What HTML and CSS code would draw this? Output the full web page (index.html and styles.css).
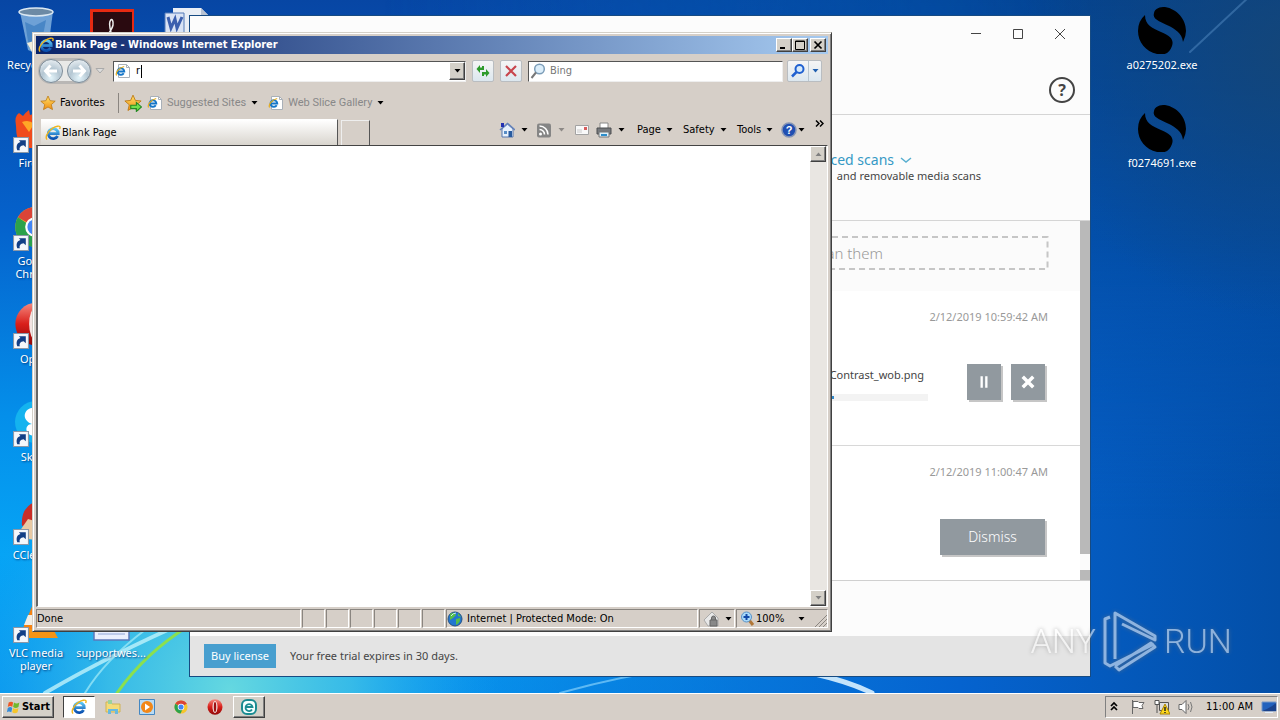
FILE: index.html
```html
<!DOCTYPE html>
<html lang="en">
<head>
<meta charset="utf-8">
<title>Desktop</title>
<link rel="stylesheet" href="styles.css">
</head>
<body>
<svg class="defs" aria-hidden="true">
  <defs>
    <linearGradient id="eBlue" x1="0" y1="0" x2="0" y2="1"><stop offset="0" stop-color="#5cc8f5"/><stop offset="1" stop-color="#0b50b0"/></linearGradient>
    <radialGradient id="orb" cx=".5" cy=".8" r=".8"><stop offset="0" stop-color="#e4f5fb"/><stop offset=".5" stop-color="#b4c6d2"/><stop offset="1" stop-color="#e8eef2"/></radialGradient>
    <linearGradient id="gold" x1="0" y1="0" x2="0" y2="1"><stop offset="0" stop-color="#ffe36a"/><stop offset="1" stop-color="#f08c10"/></linearGradient>
    <linearGradient id="operaRed" x1="0" y1="0" x2="0" y2="1"><stop offset="0" stop-color="#f58a80"/><stop offset=".5" stop-color="#d91f1a"/><stop offset="1" stop-color="#8f0808"/></linearGradient>
  </defs>
  <symbol id="ie" viewBox="0 0 16 16">
    <path d="M12.6 11A5 5 0 1 1 13.2 8.6H4.2" fill="none" stroke="url(#eBlue)" stroke-width="2.8"/>
    <path d="M2 14.6C-1 11 6 2.200 12.500 1.200C15 .8 15.600 2 14.600 4" fill="none" stroke="#f0b41c" stroke-width="1.400"/>
  </symbol>
  <symbol id="page" viewBox="0 0 16 16">
    <path d="M3.500 1.500h8l3 3v10h-11z" fill="#fff" stroke="#a9b0b8"/><path d="M11.500 1.500v3h3" fill="none" stroke="#a9b0b8"/>
    <path d="M8.700 10.300A3.300 3.300 0 1 1 9.200 8.400H3" fill="none" stroke="#1676c8" stroke-width="2"/>
    <path d="M1.600 12.500C0 10 4 4.500 9.200 3.500" fill="none" stroke="#e5ad20" stroke-width="1.200"/>
  </symbol>
  <symbol id="down" viewBox="0 0 7 4"><path d="M.5 0h6L3.500 3.500z" fill="currentColor"/></symbol>
  <symbol id="star" viewBox="0 0 16 16"><path d="M8 1l2.100 4.700 5.100.5-3.900 3.400 1.200 5L8 12l-4.500 2.600 1.200-5L.8 6.200l5.100-.5z" fill="url(#gold)" stroke="#bd7a15" stroke-width=".8"/></symbol>
  <symbol id="shortcut" viewBox="0 0 15 15"><path d="M.5.500h14v14H.5z" fill="#f4f7fb" stroke="#8b98a8"/><path d="M4 12.500C2.500 8.500 4 5.500 7 4.800L5.500 3H12v6.500L10 7.700C7 8 5.500 10 6.500 12.500z" fill="#123f86"/></symbol>
  <symbol id="chrome" viewBox="0 0 32 32">
    <circle cx="16" cy="16" r="15" fill="#f6c52b"/><path d="M16 16L3 8.500A15 15 0 0 1 29 8.500z" fill="#db4437"/><path d="M3 8.500A15 15 0 0 0 15 31L20 20z" fill="#2ba24c"/><path d="M16 9h13.300L29 8.500 16 7z" fill="#db4437"/><circle cx="16" cy="16" r="7.500" fill="#fff"/><circle cx="16" cy="16" r="5.800" fill="#4285f4"/>
  </symbol>
  <symbol id="opera" viewBox="0 0 32 32"><ellipse cx="16" cy="16" rx="15" ry="15.500" fill="url(#operaRed)"/><ellipse cx="16" cy="16" rx="5" ry="12" fill="#f3e4e2"/><ellipse cx="16" cy="16" rx="2.500" ry="10" fill="#9d1010"/></symbol>
  <symbol id="blackball" viewBox="0 0 48 48">
    <path d="M16 7C17 2 22 1 27 1C39 3 48 13 48 25Q48 30 45 36C44 27 37 23 30 19.500C21 15 14 13 16 7z"/>
    <path d="M7 9C7 19 14 22 23 26C33 30 36 34 34 40Q31 49 22 48.500C9 47 0 37 0 25Q0 15 7 9z"/>
  </symbol>
</svg>

<main class="desktop">
  <svg class="wallpaper" viewBox="0 0 1280 693" preserveAspectRatio="none" aria-hidden="true">
    <defs>
      <linearGradient id="wv" x1="0" y1="0" x2="0" y2="1"><stop offset="0" stop-color="#0746a4"/><stop offset=".32" stop-color="#0562cc"/><stop offset=".6" stop-color="#048fea"/><stop offset=".8" stop-color="#06a4f5"/><stop offset="1" stop-color="#0898f0"/></linearGradient>
      <linearGradient id="wr" x1="0" y1="0" x2="1" y2="0"><stop offset=".3" stop-color="#0560cc" stop-opacity="0"/><stop offset=".75" stop-color="#0563cf"/><stop offset="1" stop-color="#034fa8"/></linearGradient>
      <linearGradient id="wt" x1="0" y1="0" x2="0" y2="1"><stop offset="0" stop-color="#03408c" stop-opacity=".9"/><stop offset=".35" stop-color="#03489c" stop-opacity=".6"/><stop offset=".75" stop-color="#0558be" stop-opacity="0"/></linearGradient>
      <radialGradient id="wd" cx="1290" cy="50" r="270" gradientUnits="userSpaceOnUse"><stop offset="0" stop-color="#154677" stop-opacity=".9"/><stop offset="1" stop-color="#154677" stop-opacity="0"/></radialGradient>
      <radialGradient id="wc" cx="230" cy="690" r="270" gradientUnits="userSpaceOnUse"><stop offset="0" stop-color="#65d8e0"/><stop offset=".45" stop-color="#42c3e6" stop-opacity=".8"/><stop offset="1" stop-color="#18a0ee" stop-opacity="0"/></radialGradient>
      <linearGradient id="wm" x1="0" y1="0" x2="1" y2="0"><stop offset=".3" stop-color="#fff" stop-opacity="0"/><stop offset=".85" stop-color="#fff"/></linearGradient>
      <mask id="rightSide"><path fill="url(#wm)" d="M0 0h1280v693H0z"/></mask>
    </defs>
    <path fill="url(#wv)" d="M0 0h1280v693H0z"/><path fill="url(#wr)" d="M0 0h1280v693H0z"/><path fill="url(#wt)" mask="url(#rightSide)" d="M0 0h1280v693H0z"/><path fill="url(#wd)" d="M0 0h1280v693H0z"/><path fill="url(#wc)" d="M0 420h560v273H0z"/>
    <g fill="none" stroke-linecap="round">
      <path d="M45 693Q110 655 190 620" stroke="#bff3fb" stroke-width="4" opacity=".8"/>
      <path d="M85 693Q105 660 145 630" stroke="#a5ecf8" stroke-width="2" opacity=".7"/>
      <path d="M117 693Q145 653 190 625" stroke="#8be04e" stroke-width="3"/>
      <path d="M560 693Q620 676 680 668" stroke="#83d0fb" stroke-width="2" opacity=".7"/>
      <path d="M815 674Q850 682 872 693" stroke="#d9f1ff" stroke-width="5" opacity=".9"/>
      <path d="M1190 52L1250 -4" stroke="#5c92ca" stroke-width="2" opacity=".45"/>
    </g>
  </svg>

  <section class="icons-left" aria-label="Desktop icons">
    <div class="shortcut"><svg class="pic" viewBox="0 0 48 48"><path d="M8 6l33-1-5 39q-11 5-20 0z" fill="#91bfe6" opacity=".75"/><path d="M13 16l9 4 12-6-5 26-12 2z" fill="#3f7fc2" opacity=".8"/><ellipse cx="24" cy="6" rx="17" ry="4" fill="#6c8aa5" stroke="#dbe8f2" stroke-width="1.500"/><path d="M15 37l7-2 5 6-7 5z" fill="#f2edda"/></svg><span>Recycle Bin</span></div>
    <div class="shortcut"><svg class="pic" viewBox="0 0 48 48"><path d="M4 22Q2 12 7 9l4 3q3-4 6-6l1 5q10-4 20 4v29H10Q4 36 4 22z" fill="#f04b1d"/><path d="M10 18q7-3 12 2l-5 8z" fill="#ffa726"/></svg><svg class="arrow"><use href="#shortcut"/></svg><span>Firefox</span></div>
    <div class="shortcut"><svg class="pic" viewBox="0 0 48 48"><use href="#chrome" x="2" y="4" width="42" height="42"/></svg><svg class="arrow"><use href="#shortcut"/></svg><span>Google<br>Chrome</span></div>
    <div class="shortcut"><svg class="pic" viewBox="0 0 48 48"><use href="#opera" x="2" y="2" width="44" height="44"/></svg><svg class="arrow"><use href="#shortcut"/></svg><span>Opera</span></div>
    <div class="shortcut"><svg class="pic" viewBox="0 0 48 48"><circle cx="24" cy="24" r="21" fill="#14b3ef"/><path d="M24 10c-12-2-16 12-4 16-8 0-8 12 4 12z" fill="#fff"/></svg><svg class="arrow"><use href="#shortcut"/></svg><span>Skype</span></div>
    <div class="shortcut"><svg class="pic" viewBox="0 0 48 48"><path d="M10 30Q8 8 30 4v20z" fill="#c92d27"/><path d="M3 42l13-19 10 3v18z" fill="#e8c9a4"/></svg><svg class="arrow"><use href="#shortcut"/></svg><span>CCleaner</span></div>
    <div class="shortcut"><svg class="pic" viewBox="0 0 48 48"><path d="M24 3l15 36H9z" fill="#f58212"/><path d="M16 21h15l5 10H12z" fill="#f2eee5"/><path d="M8 35h33l5 9H3z" fill="#f49415"/></svg><svg class="arrow"><use href="#shortcut"/></svg><span>VLC media<br>player</span></div>
  </section>
  <div class="shortcut adobe"><svg class="pic" viewBox="0 0 48 48"><path d="M5.500 4.500h42v42h-42z" fill="#2a0a10" stroke="#e62a12" stroke-width="3"/><path d="M25 26c-4-14 3-16 2-7-1 5-5 9-8 14" fill="none" stroke="#eee" stroke-width="1.500"/></svg></div>
  <div class="shortcut word"><svg class="pic" viewBox="0 0 48 48"><path d="M10 7h28l8 8v32H10z" fill="#e9eef5"/><path d="M38 7v8h8z" fill="#b8c2d2"/><path d="M2 12h19v20H2z" fill="#d9e3f4" stroke="#537ab8"/><path d="M5 16l3 11 4-9 2 9 5-11" fill="none" stroke="#3b5fae" stroke-width="3"/></svg></div>
  <div class="shortcut support"><svg class="pic" viewBox="0 0 48 48"><path d="M7 4h35v42H7z" fill="#e9effd" stroke="#5c79ba" stroke-width="1.500"/><path d="M11 40h27M11 35h27" stroke="#8fa6d8"/></svg><span>supportwes...</span></div>
  <section class="icons-right" aria-label="Programs">
    <div class="shortcut"><svg class="pic"><use href="#blackball"/></svg><span>a0275202.exe</span></div>
    <div class="shortcut"><svg class="pic"><use href="#blackball"/></svg><span>f0274691.exe</span></div>
  </section>

  <section class="scanner" aria-label="Scanner">
    <header class="sc-head">
      <div class="sc-controls">
        <button aria-label="Minimize"><svg viewBox="0 0 12 12"><path d="M1 5.500h10"/></svg></button>
        <button aria-label="Maximize"><svg viewBox="0 0 12 12"><path d="M1.500 1.500h9v9h-9z"/></svg></button>
        <button aria-label="Close"><svg viewBox="0 0 12 12"><path d="M1 1l10 10M11 1L1 11"/></svg></button>
      </div>
      <button class="sc-help" aria-label="Help">?</button>
    </header>
    <div class="sc-modes">
      <a href="#" class="sc-link">Advanced scans <svg viewBox="0 0 12 8"><path d="M1 2l5 4 5-4"/></svg></a>
      <p>and removable media scans</p>
    </div>
    <div class="sc-list">
      <div class="sc-rows">
        <div class="sc-drop"><div class="sc-dash"><svg width="100%" height="100%"><rect x="1" y="1" width="99.7%" height="32"/></svg><span>scan them</span></div></div>
        <article class="sc-row first">
          <time>2/12/2019 10:59:42 AM</time>
          <div class="sc-job">
            <div class="sc-file"><span>Contrast_wob.png</span><div class="sc-bar"><i></i></div></div>
            <button class="sc-btn square" aria-label="Pause"><svg viewBox="0 0 12 12"><path d="M4 1v10M8 1v10" stroke-width="2"/></svg></button>
            <button class="sc-btn square" aria-label="Cancel"><svg viewBox="0 0 12 12"><path d="M1.500 1.500l9 9M10.500 1.500l-9 9" stroke-width="3"/></svg></button>
          </div>
        </article>
        <article class="sc-row"><time>2/12/2019 11:00:47 AM</time><button class="sc-btn">Dismiss</button></article>
      </div>
      <div class="sc-scroll"><i></i></div>
    </div>
    <footer class="sc-foot"><button>Buy license</button><span>Your free trial expires in 30 days.</span></footer>
  </section>

  <section class="browser" aria-label="Internet Explorer">
    <header class="titlebar">
      <svg class="i16"><use href="#ie"/></svg><h1>Blank Page - Windows Internet Explorer</h1>
      <button class="raised" aria-label="Minimize"><svg viewBox="0 0 10 10"><path d="M1 8h5" stroke-width="2"/></svg></button>
      <button class="raised" aria-label="Maximize"><svg viewBox="0 0 10 10"><path d="M.5 1h9v8.500h-9zM.5 1.500h9"/></svg></button>
      <button class="raised close" aria-label="Close"><svg viewBox="0 0 10 10"><path d="M1.500 1.500l7 7M8.500 1.500l-7 7" stroke-width="1.700"/></svg></button>
    </header>
    <nav class="navbar">
      <svg class="orbs" viewBox="0 0 56 28"><path d="M14 1h28a13 13 0 0 1 0 26H14a13 13 0 0 1 0-26z" fill="#b9b7b5"/><path d="M14 4h28v20H14z" fill="#e9e9e7"/><circle cx="14" cy="14" r="11.500" fill="url(#orb)" stroke="#7d8c98"/><circle cx="42" cy="14" r="11.500" fill="url(#orb)" stroke="#7d8c98"/><path d="M20 14H9M13.500 8.500L8.500 14l5 5.500M36 14h11M42.500 8.500l5 5.500-5 5.500" fill="none" stroke="#fff" stroke-width="3"/></svg>
      <svg class="hist" viewBox="0 0 10 6"><path d="M1 .5h8L5 5z" fill="#ddd" stroke="#aaa"/></svg>
      <div class="field address"><svg class="i16"><use href="#page"/></svg><input aria-label="Address" value="r"><i class="caret"></i><button class="raised" aria-label="Show addresses"><svg class="dn"><use href="#down"/></svg></button></div>
      <button class="tool" aria-label="Refresh"><svg viewBox="0 0 16 16"><path d="M1.500 6L5 2v2.500h2V3h2v4H5v3zM14.500 10L11 14v-2.500H9V13H7V9h4V6z" fill="#2d9a2b"/></svg></button>
      <button class="tool" aria-label="Stop"><svg viewBox="0 0 16 16"><path d="M3 3l10 10M13 3L3 13" stroke="#c8454d" stroke-width="2.200"/></svg></button>
      <div class="field search"><svg class="i16" viewBox="0 0 16 16"><circle cx="9.500" cy="6" r="4.800" fill="#dceefa" stroke="#7c9db8" stroke-width="1.500"/><path d="M6 9.500L1.500 15" stroke="#777" stroke-width="2"/></svg><input aria-label="Search" placeholder="Bing"></div>
      <div class="split"><button aria-label="Search"><svg viewBox="0 0 16 16"><circle cx="9.500" cy="6" r="4" fill="#d5eafb" stroke="#2060d0" stroke-width="2"/><path d="M6.500 9L2 13.500" stroke="#2060d0" stroke-width="2.500"/></svg></button><button aria-label="Search options"><svg class="dn"><use href="#down"/></svg></button></div>
    </nav>
    <nav class="favbar">
      <button class="fav"><svg class="i16"><use href="#star"/></svg>Favorites</button>
      <button class="add" aria-label="Add to favorites"><svg viewBox="0 0 16 16"><use href="#star"/><path d="M6 10h5V7.500l4.500 4-4.500 4V13H6z" fill="#70df4d" stroke="#238b24"/></svg></button>
      <button class="link one"><svg class="i16"><use href="#page"/></svg>Suggested Sites<svg class="dn"><use href="#down"/></svg></button>
      <button class="link"><svg class="i16"><use href="#page"/></svg>Web Slice Gallery<svg class="dn"><use href="#down"/></svg></button>
    </nav>
    <div class="tabrow">
      <button class="tab"><svg class="i16"><use href="#ie"/></svg>Blank Page</button><button class="newtab" aria-label="New tab"></button>
      <div class="commands">
        <button class="w37" aria-label="Home"><svg class="i16" viewBox="0 0 16 16"><path d="M3 7v8h11V7L8.500 2z" fill="#e8f1fc" stroke="#5776ac"/><path d="M1 8l7.500-6.500L16 8" fill="none" stroke="#6482ba" stroke-width="1.600"/><path d="M9.500 9H13v6H9.500z" fill="#285b9f"/><path d="M5 9h3v3H5z" fill="#598dc5"/><path d="M2 1h3v4H2z" fill="#2431b2"/></svg><svg class="dn"><use href="#down"/></svg></button>
        <button class="w38" aria-label="Feeds"><svg class="i16" viewBox="0 0 16 16"><rect x="1" y="1.500" width="14" height="14" rx="2" fill="#858585"/><circle cx="4.500" cy="12" r="1.500" fill="#fff"/><path d="M3.500 7.500a5 5 0 0 1 5 5M3.500 4a8.500 8.500 0 0 1 8.500 8.500" fill="none" stroke="#fff" stroke-width="1.600"/></svg><svg class="dn dim"><use href="#down"/></svg></button>
        <button class="w22" aria-label="Mail"><svg class="i16" viewBox="0 0 16 16"><path d="M1.500 3.500h13v9h-13z" fill="#f9f9f9" stroke="#a3a3a3"/><path d="M10 5h3v3h-3z" fill="#d75d5d"/><path d="M3 8h5M3 10h5" stroke="#ccc"/></svg></button>
        <button class="w41" aria-label="Print"><svg class="i16" viewBox="0 0 16 16"><path d="M4 1h8v6H4z" fill="#fff" stroke="#888"/><path d="M1 6h14v6H1z" fill="#76797d" stroke="#4c4e50"/><path d="M3 10h10v5H3z" fill="#dff0f9" stroke="#777"/><path d="M5 12h6v2H5z" fill="#2d8ecb"/></svg><svg class="dn"><use href="#down"/></svg></button>
        <button class="w46">Page<svg class="dn"><use href="#down"/></svg></button><button class="w54">Safety<svg class="dn"><use href="#down"/></svg></button><button class="w44">Tools<svg class="dn"><use href="#down"/></svg></button>
        <button class="w34" aria-label="Help"><svg class="i16" viewBox="0 0 16 16"><circle cx="8" cy="8" r="7" fill="#204fb2" stroke="#8695b5" stroke-width="1.500"/><text x="8" y="12" text-anchor="middle" class="helpmark">?</text></svg><svg class="dn"><use href="#down"/></svg></button>
        <button class="more" aria-label="More"><svg viewBox="0 0 9 7"><path d="M1 .5l3 3-3 3M5 .5l3 3-3 3"/></svg></button>
      </div>
    </div>
    <div class="view"><div class="blank"></div><div class="scroll"><button class="raised" aria-label="Scroll up"><svg class="dn up"><use href="#down"/></svg></button><button class="raised" aria-label="Scroll down"><svg class="dn"><use href="#down"/></svg></button></div></div>
    <footer class="status">
      <span class="done">Done</span><i></i><i></i><i></i><i></i><i></i><i></i>
      <span class="zone"><svg class="i16" viewBox="0 0 16 16"><circle cx="8" cy="8" r="7" fill="#2176d0" stroke="#255183"/><path d="M3 3q5-3 6 1l-3 3-3 2zM9 8l4-1q1 4-4 7zM11 2l3 4-3-1z" fill="#57bd48"/><path d="M4 5q2-3 5-3" fill="none" stroke="#c8eeff"/></svg>Internet | Protected Mode: On</span>
      <button class="lock" aria-label="Privacy"><svg class="i16" viewBox="0 0 16 16"><path d="M1 9l8-8 6 6v8H5z" fill="#e8e8e8" stroke="#aaa"/><path d="M7 9h7v6H7zM8.500 9V7a2 2 0 0 1 4 0v2" fill="#888" stroke="#666"/></svg><svg class="dn"><use href="#down"/></svg></button>
      <button class="zoom"><svg class="i16" viewBox="0 0 16 16"><path d="M9 9l4 5" stroke="#b17737" stroke-width="3"/><circle cx="6.500" cy="6" r="5" fill="#a9dafa" stroke="#5991c7"/><path d="M3.500 6h6M6.500 3v6" stroke="#1249a8" stroke-width="2"/></svg>100%<svg class="dn"><use href="#down"/></svg><svg class="grip" viewBox="0 0 14 14"><path d="M2 14L14 2M6 14l8-8M10 14l4-4"/></svg></button>
    </footer>
  </section>

  <div class="watermark" aria-label="ANY RUN"><span>ANY</span><svg viewBox="0 0 56 64"><path d="M8 8L3 10v44l5 3 44-22M13 50V4l40 23v4L20 15M13 57l4 4 36-23-4-4-36 23" fill="none"/></svg><span>RUN</span></div>
</main>

<footer class="taskbar">
  <button class="start raised"><svg viewBox="0 0 18 16"><path d="M3 3q3-2 5 0L7 8q-2-2-5 0z" fill="#ee5725"/><path d="M9 3q3 2 6 0l-1 5q-3 2-6 0z" fill="#72b82c"/><path d="M2 9q3-2 5 0l-1 5q-3-2-5 0z" fill="#348bd9"/><path d="M8 9q3 2 6 0l-1 5q-3 2-6 0z" fill="#f5c52b"/></svg>Start</button>
  <div class="tasks">
    <button class="task pressed" aria-label="Internet Explorer"><svg><use href="#ie"/></svg></button>
    <button class="task" aria-label="Explorer"><svg viewBox="0 0 16 16"><path d="M1 3h5l1 2h8v8H1z" fill="#f4db78" stroke="#cfb356"/><path d="M3 1h4v4H3z" fill="#9bd29a"/><path d="M3 15v-5h10v5h-3v-3H6v3z" fill="#68b9df"/></svg></button>
    <button class="task" aria-label="Media Player"><svg viewBox="0 0 16 16"><path d="M.5.500h15v15H.5z" fill="#b9dbf4" stroke="#4487c2"/><circle cx="8" cy="8" r="6" fill="#f28718"/><path d="M6 4.500v7l5-3.500z" fill="#fff"/></svg></button>
    <button class="task" aria-label="Chrome"><svg><use href="#chrome" x="1" y="1" width="14" height="14"/></svg></button>
    <button class="task" aria-label="Opera"><svg><use href="#opera"/></svg></button>
    <button class="task raised" aria-label="ESET"><svg viewBox="0 0 16 16"><rect x="1" y="1" width="14" height="14" rx="5" fill="#f4ffff" stroke="#198b91" stroke-width="2"/><path d="M11 10.500A3.500 3.500 0 1 1 11.500 8H5" fill="none" stroke="#198b91" stroke-width="1.800"/></svg></button>
  </div>
  <div class="tray">
    <button aria-label="Show hidden icons"><svg viewBox="0 0 16 16"><path d="M5 7l3-3 3 3M5 11l3-3 3 3" fill="none" stroke="#000" stroke-width="1.700"/></svg></button>
    <button aria-label="Action center"><svg viewBox="0 0 16 16"><path d="M2.500 1v14M3 2.500h5l1 1h5l-2 3 1 3H9l-1-1H3z" fill="#fff" stroke="#666"/></svg></button>
    <button aria-label="Network"><svg viewBox="0 0 16 16"><path d="M5.500 3.500h9v8h-9z" fill="#ddd" stroke="#555"/><path d="M1 1.500h4v4H1zM3 5v9" fill="#fff" stroke="#555"/><path d="M11 5l5 10H6z" fill="#ffd91c" stroke="#a88200"/><path d="M11 8v4M11 13v1" stroke="#222" stroke-width="1.500"/></svg></button>
    <button aria-label="Volume"><svg viewBox="0 0 16 16"><path d="M1 5.500h3l4-4v13l-4-4H1z" fill="#fff" stroke="#666"/><path d="M10 5q2 3 0 6M12.500 3q3 5 0 10" fill="none" stroke="#777"/></svg></button>
    <time>11:00 AM</time>
    <button aria-label="Show desktop"><svg viewBox="0 0 16 16"><path d="M1 3h14v9H1z" fill="#2362bd" stroke="#7697c7"/><path d="M1 12Q8 10 15 4v8z" fill="#1b438c"/><path d="M4 13h8v1H4z" fill="#e4edf8"/></svg></button>
  </div>
</footer>
</body>
</html>
```
FILE: styles.css
```css
* { box-sizing: border-box; }
body { margin: 0; min-height: 100vh; display: flex; flex-direction: column; font: 11px/14px "DejaVu Sans Condensed", "Noto Sans", sans-serif; color: #000; background: #0560c8; overflow: hidden; }
button, input { font: inherit; color: inherit; border: 0; padding: 0; margin: 0; background: none; border-radius: 0; }
button { display: flex; align-items: center; justify-content: center; white-space: nowrap; }
svg { flex: none; display: block; }
.defs { position: absolute; width: 0; height: 0; }
.i16 { width: 16px; height: 16px; }
.dn { width: 7px; height: 4px; }
.raised { background: #d4d0c8; border: 1px solid; border-color: #fff #404040 #404040 #fff; box-shadow: inset -1px -1px #808080; }

.desktop { flex: 1; position: relative; overflow: hidden; }
.wallpaper { position: absolute; inset: 0; width: 100%; height: 100%; }
.shortcut { width: 70px; height: 98px; display: flex; flex-direction: column; align-items: center; position: relative; color: #fff; text-align: center; font: 11px/13px "Noto Sans", sans-serif; }
.shortcut .pic { width: 48px; height: 48px; margin-bottom: 4px; }
.shortcut .arrow { position: absolute; left: 12px; top: 33px; width: 16px; height: 16px; }
.shortcut span { text-shadow: 1px 1px 2px #003f80; }
.icons-left { position: absolute; left: 1px; top: 6px; }
.adobe { position: absolute; left: 75px; top: 6px; }
.word { position: absolute; left: 152px; top: 1px; }
.support { position: absolute; left: 76px; top: 594px; }
.icons-right { position: absolute; right: 83px; top: 6px; }

.scanner { position: absolute; left: 189px; top: 15px; width: 902px; height: 662px; display: flex; flex-direction: column; background: #fcfcfc; border: 1px solid #174b82; font: 12px/16px "Noto Sans", sans-serif; color: #454545; }
.sc-head { height: 99px; border-bottom: 1px solid #d5d5d5; display: flex; flex-direction: column; align-items: flex-end; gap: 35px; padding: 10px 15px; }
.sc-controls { display: flex; gap: 26px; padding-right: 7px; }
.sc-controls button { width: 16px; height: 16px; }
.sc-controls svg { width: 12px; height: 12px; fill: none; stroke: #444; stroke-width: 1; }
.sc-help { width: 26px; height: 26px; border: 2px solid #444; border-radius: 50%; font-weight: 700; font-size: 16px; }
.sc-modes { height: 106px; border-bottom: 1px solid #d5d5d5; padding: 37px 109px 0 0; display: flex; flex-direction: column; align-items: flex-end; font-size: 11px; }
.sc-modes p { margin: 0; }
.sc-link { color: #3599c5; text-decoration: none; font-size: 14px; line-height: 16px; display: flex; align-items: center; gap: 6px; padding-right: 69px; }
.sc-link svg { width: 12px; height: 8px; fill: none; stroke: #58afd0; stroke-width: 1.500; }
.sc-list { flex: 1; display: flex; min-height: 0; border-bottom: 1px solid #d0d0d0; background: #fff; }
.sc-rows { flex: 1; display: flex; flex-direction: column; }
.sc-drop { height: 70px; background: #fbfbfb; padding: 15px 31px 0; }
.sc-dash { height: 34px; display: grid; align-items: center; justify-items: end; font-size: 15px; font-weight: 300; color: #999; }
.sc-dash > * { grid-area: 1 / 1; }
.sc-dash span { padding-right: 166px; }
.sc-dash rect { fill: none; stroke: #c6c6c6; stroke-width: 2; stroke-dasharray: 6 4; }
.sc-row { flex: 1; padding: 18px 32px 0; display: flex; flex-direction: column; align-items: flex-end; gap: 39px; }
.sc-row.first { flex: none; height: 155px; border-bottom: 1px solid #d8d8d8; }
.sc-row time { color: #999; font-size: 11px; }
.sc-btn { width: 105px; height: 36px; margin-right: 3px; background: #91999f; color: #fff; box-shadow: 2px 2px #c6c6c6; font-size: 14px; font-weight: 300; }
.sc-btn.square { width: 34px; margin-right: 0; }
.sc-btn svg { width: 14px; height: 14px; fill: none; stroke: #fff; }
.sc-job { display: flex; gap: 10px; padding-right: 3px; }
.sc-file { width: 300px; margin-right: 29px; text-align: right; line-height: 22px; font-size: 11px; }
.sc-file span { padding-right: 4px; }
.sc-bar { height: 7px; margin-top: 8px; background: #f3f3f3; }
.sc-bar i { display: block; height: 100%; width: 206px; background: linear-gradient(#f3f3f3 2px, #3188c8 2px, #3188c8 5px, #f3f3f3 5px); }
.sc-scroll { width: 10px; background: #b9b9b9; padding-top: 333px; }
.sc-scroll i { display: block; height: 16px; background: #fbfbfb; }
.sc-foot { height: 95px; border-top: 55px solid #fcfcfc; background: #e4e4e4; display: flex; align-items: center; gap: 14px; padding: 0 14px; font-size: 11px; }
.sc-foot button { width: 72px; height: 24px; background: #489fcf; color: #fff; }

.browser { position: absolute; left: 32px; top: 32px; width: 800px; height: 600px; display: flex; flex-direction: column; background: #d6cfc8; border: 1px solid; border-color: #d4d0c8 #404040 #404040 #d4d0c8; box-shadow: inset 1px 1px #fff, inset -1px -1px #808080; padding: 3px; }
.titlebar { height: 18px; background: linear-gradient(90deg, #0a246a, #a6caf0); color: #fff; display: flex; align-items: center; padding: 0 2px; }
.titlebar h1 { flex: 1; margin: 0 0 0 1px; font: 700 11px/14px "DejaVu Sans Condensed", sans-serif; }
.titlebar button { width: 16px; height: 14px; }
.titlebar .close { margin-left: 2px; }
.titlebar button svg { width: 10px; height: 10px; fill: none; stroke: #000; }
.navbar { height: 34px; display: flex; align-items: center; padding: 0 6px 0 1px; gap: 6px; }
.orbs { width: 56px; height: 28px; }
.hist { width: 10px; height: 6px; margin-left: -4px; }
.field { height: 21px; background: #fff; border: 1px solid; border-color: #555 #eee #eee #555; display: flex; align-items: center; }
.field input { min-width: 0; outline: 0; }
.address { flex: 1; padding: 0 0 0 1px; margin-left: 2px; }
.address input { width: 5px; margin-left: 5px; }
.address .caret { width: 1px; height: 13px; background: #000; margin-right: auto; }
.address button { width: 16px; height: 18px; }
.search { width: 255px; gap: 4px; padding-left: 1px; }
.search input { flex: 1; }
.search input::placeholder { color: #777; opacity: 1; }
.tool, .split { height: 22px; background: linear-gradient(#f5f5f5, #dce7ef); border: 1px solid #b9bdc1; border-radius: 2px; }
.tool { width: 22px; }
.tool svg { width: 16px; height: 16px; fill: none; }
.split { width: 35px; display: flex; color: #2060b0; margin-left: -2px; }
.split button:first-child { width: 21px; border-right: 1px solid #b9c6d0; }
.split button:last-child { flex: 1; }
.split button svg:not(.dn) { width: 16px; height: 16px; }
.favbar { height: 29px; display: flex; align-items: center; padding-left: 4px; color: #888; }
.fav { width: 79px; height: 20px; gap: 4px; justify-content: flex-start; color: #000; border-right: 1px solid #8a8580; }
.add { width: 28px; }
.add svg { width: 18px; height: 18px; }
.link { gap: 4px; font: 11px/14px "Roboto", sans-serif; }
.link.one { margin-right: 10px; }
.link .dn { color: #000; margin-left: 1px; }
.tabrow { height: 28px; display: flex; align-items: flex-end; padding: 0 2px 0 5px; }
.tab { width: 297px; height: 26px; gap: 1px; padding-left: 4px; justify-content: flex-start; background: linear-gradient(#fff, #d9d5ce); border-right: 1px solid #555; border-top: 1px solid #fff; }
.newtab { width: 29px; height: 25px; margin-left: 3px; border: 1px solid #eee; border-right: 1px solid #555; border-bottom: 0; }
.commands { flex: 1; display: flex; justify-content: flex-end; align-items: center; height: 30px; }
.commands > button { justify-content: flex-start; gap: 6px; height: 22px; }
.commands .dim { color: #8d8986; }
.w37 { width: 37px; } .w38 { width: 38px; } .w22 { width: 22px; } .w41 { width: 41px; }
.w46 { width: 46px; } .w54 { width: 54px; } .w44 { width: 44px; } .w34 { width: 34px; }
.w46 .dn, .w54 .dn, .w44 .dn { margin-left: -1px; }
.commands .w34 { gap: 1px; }
.commands .more { margin-right: 2px; }
.helpmark { fill: #fff; font: 700 11px "Liberation Sans", sans-serif; }
.more svg { width: 9px; height: 7px; fill: none; stroke: #000; stroke-width: 1.500; margin-bottom: 13px; }
.view { flex: 1; border: 1px solid; border-color: #444 #fff #fff #666; border-left-width: 2px; display: flex; background: #fff; }
.blank { flex: 1; }
.scroll { width: 17px; padding-right: 1px; background: #e9e6e2; display: flex; flex-direction: column; justify-content: space-between; color: #808080; }
.scroll button { width: 16px; height: 16px; }
.up { transform: rotate(180deg); }
.status { height: 21px; padding-top: 2px; display: flex; gap: 1px; }
.status > * { height: 19px; border: 1px solid; border-color: #8a8580 #fff #fff #8a8580; display: flex; align-items: center; }
.status .done { flex: 1; }
.status i { width: 23px; }
.zone { width: 252px; gap: 4px; }
.lock { width: 36px; gap: 6px; }
.zoom { width: 92px; gap: 0; padding-left: 3px; justify-content: flex-start; }
.zoom .dn { margin: 0 8px 0 14px; }
.grip { width: 14px; height: 14px; fill: none; stroke: #8a8580; align-self: flex-end; }

.watermark { position: absolute; right: 48px; bottom: 20px; display: flex; align-items: center; gap: 6px; color: #fff; opacity: .55; font: 300 34px/64px "Roboto", sans-serif; filter: drop-shadow(0 0 2px #777); }
.watermark svg { width: 56px; height: 64px; stroke: #fff; stroke-width: 3; stroke-linejoin: round; }

.taskbar { position: relative; height: 27px; background: #d6cfc8; border-top: 1px solid #fff; display: flex; align-items: center; padding: 0 2px; }
.start { width: 52px; height: 22px; font-weight: 700; }
.start svg { width: 16px; height: 16px; }
.tasks { flex: 1; display: flex; gap: 2px; padding-left: 9px; }
.task { width: 32px; height: 22px; }
.task svg { width: 16px; height: 16px; }
.pressed { background: #fff; border: 1px solid; border-color: #404040 #fff #fff #404040; }
.tray { height: 22px; border: 1px solid; border-color: #808080 #fff #fff #808080; display: flex; align-items: center; gap: 8px; }
.tray svg { width: 16px; height: 16px; }
.tray time { padding-left: 4px; }
```
